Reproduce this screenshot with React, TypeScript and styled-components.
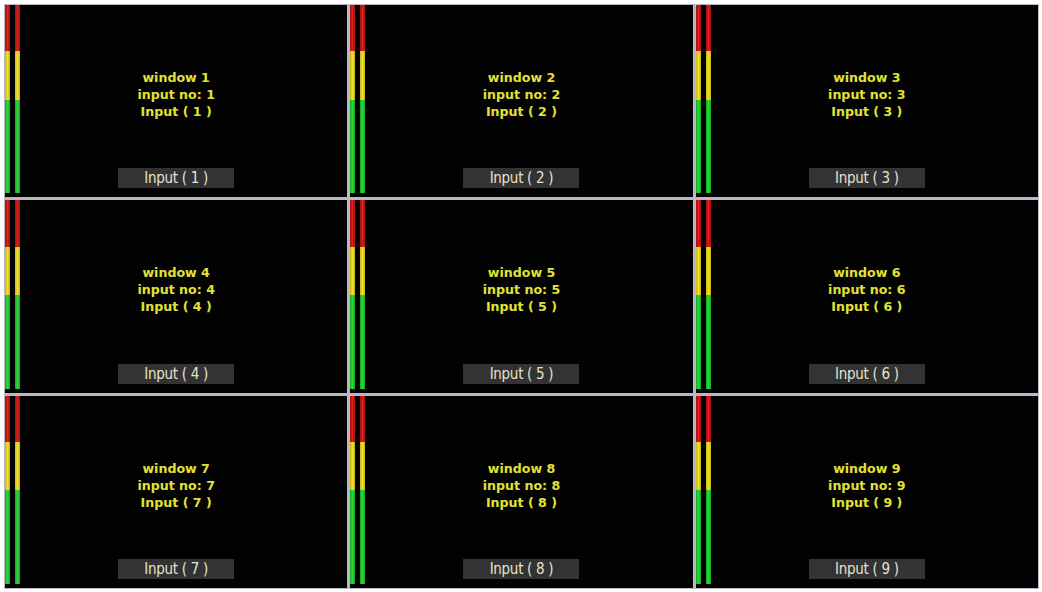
import React from "react";
import styled, { createGlobalStyle } from "styled-components";

const Global = createGlobalStyle`
  html, body { margin: 0; padding: 0; background: #ffffff; }
  body { width: 1042px; height: 592px; overflow: hidden; }
`;

const Page = styled.div`
  width: 1042px;
  height: 592px;
  padding: 4px 0 0 4px;
  box-sizing: border-box;
`;

const Wall = styled.div`
  width: 1035px;
  height: 585px;
  box-sizing: border-box;
  padding: 1px;
  background: #b9b9c6;
  display: grid;
  grid-template-columns: repeat(3, 1fr);
  grid-template-rows: repeat(3, 1fr);
  gap: 3px;
`;

const Panel = styled.div`
  background: #030203;
  display: grid;
  grid-template-columns: 16px 1fr 16px;
  min-height: 0;
`;

const Meter = styled.div`
  display: flex;
  gap: 5px;
  padding-bottom: 4px;
`;

const Bar = styled.div`
  width: 5px;
  display: flex;
  flex-direction: column;
`;

const Seg = styled.div<{ $c: string; $h: string }>`
  background: ${(p) => p.$c};
  flex: ${(p) => p.$h};
`;

const Content = styled.div`
  display: flex;
  flex-direction: column;
  align-items: center;
  padding-top: 64px;
  padding-bottom: 9px;
`;

const Info = styled.div`
  font-family: "DejaVu Sans", Verdana, sans-serif;
  font-weight: bold;
  font-size: 12.6px;
  line-height: 17px;
  color: #e2e234;
  text-align: center;
  white-space: pre;
`;

const Label = styled.div`
  margin-top: auto;
  width: 116px;
  height: 20px;
  background: #333234;
  color: #e4e4cc;
  font-family: "DejaVu Sans Condensed", "DejaVu Sans", sans-serif;
  font-size: 15px;
  line-height: 20px;
  letter-spacing: -0.3px;
  text-align: center;
  white-space: pre;
`;

const Segments = () => (
  <Bar>
    <Seg $c="linear-gradient(90deg,#a01010,#e01c1c 50%,#a01010)" $h="46" />
    <Seg $c="linear-gradient(90deg,#c8b410,#f0e030 50%,#c8b410)" $h="48" />
    <Seg $c="linear-gradient(90deg,#16a822,#2ada3a 50%,#16a822)" $h="93" />
  </Bar>
);

export default function App() {
  const items = Array.from({ length: 9 }, (_, i) => i + 1);
  return (
    <Page>
      <Global />
      <Wall>
        {items.map((n) => (
          <Panel key={n}>
            <Meter>
              <Segments />
              <Segments />
            </Meter>
            <Content>
              <Info>{`window ${n}\ninput no: ${n}\nInput ( ${n} )`}</Info>
              <Label>{`Input ( ${n} )`}</Label>
            </Content>
            <div />
          </Panel>
        ))}
      </Wall>
    </Page>
  );
}
